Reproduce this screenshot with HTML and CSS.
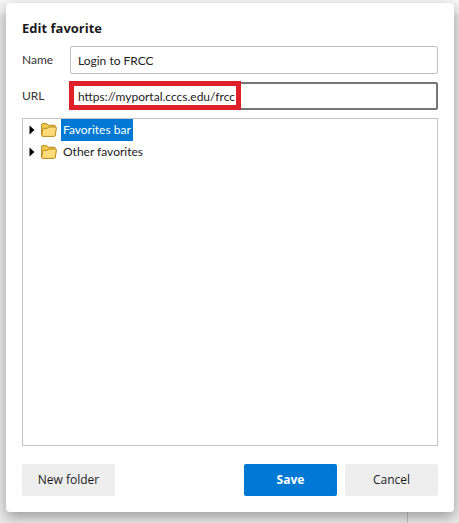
FILE: index.html
```html
<!doctype html>
<html lang="en">
<head>
	<meta charset="utf-8">
	<meta name="viewport" content="width=device-width, initial-scale=1.0" />
	<title>Edit favorite</title>
	<link rel="stylesheet" href="styles.css">
</head>
<body>

	<form class="dialog">
		<h1>Edit favorite</h1>

		<div class="field">
			<label for="name">Name</label>
			<div class="control"><input type="text" id="name" value="Login to FRCC" /></div>
		</div>
		<div class="field">
			<label for="url">URL</label>
			<div class="control">
				<input type="text" id="url" class="active" value="https://myportal.cccs.edu/frcc" />
				<span class="highlight"></span>
			</div>
		</div>

		<ul class="tree" role="tree">
			<li role="treeitem" aria-selected="true">
				<svg class="arrow" viewBox="0 0 6 10"><path d="M0.5 0.5L5.5 5L0.5 9.5Z"/></svg>
				<svg class="folder" viewBox="0 0 16 14"><path class="back" d="M0.6 12V2Q0.6 0.6 2 0.6H5.5L7.3 2.2H13Q14.4 2.2 14.4 3.6V12Z"/><path class="front" d="M0.7 12.2L1.8 6.2Q2 5.3 2.9 5.3H6.3L8 4H14.4Q15.6 4 15.4 5.1L14.3 12.2Q14.1 13.4 12.9 13.4H1.9Q0.5 13.4 0.7 12.2Z"/></svg>
				<span class="title selected">Favorites bar</span>
			</li>
			<li role="treeitem">
				<svg class="arrow" viewBox="0 0 6 10"><path d="M0.5 0.5L5.5 5L0.5 9.5Z"/></svg>
				<svg class="folder" viewBox="0 0 16 14"><path class="back" d="M0.6 12V2Q0.6 0.6 2 0.6H5.5L7.3 2.2H13Q14.4 2.2 14.4 3.6V12Z"/><path class="front" d="M0.7 12.2L1.8 6.2Q2 5.3 2.9 5.3H6.3L8 4H14.4Q15.6 4 15.4 5.1L14.3 12.2Q14.1 13.4 12.9 13.4H1.9Q0.5 13.4 0.7 12.2Z"/></svg>
				<span class="title">Other favorites</span>
			</li>
		</ul>

		<div class="buttons">
			<button type="button" class="new">New folder</button>
			<button type="submit" class="primary">Save</button>
			<button type="button">Cancel</button>
		</div>
	</form>

</body>
</html>
```

FILE: styles.css
```css
* {box-sizing:border-box; margin:0; padding:0;}
body {display:flex; min-height:100vh; padding:3px 5px 11px 6px; background:linear-gradient(#c4c4c4,#c4c4c4) right 51px bottom/1px 11px no-repeat, linear-gradient(#f8f8f8 3px, #f4f4f4 3px, #f4f4f4 14px, #ebebeb 14px); font:12px/16px Lato,"Open Sans",sans-serif; color:#1b1b1b;}

.dialog {flex:1; display:flex; flex-direction:column; padding:16px; background:#fff; border-radius:4px; box-shadow:0 5px 14px rgba(0,0,0,0.35);}
h1 {margin-bottom:9px; font:700 13px/18px "Open Sans",sans-serif;}

.field {display:flex; align-items:center; margin-bottom:8px;}
label {width:48px; color:#333;}
.control {position:relative; flex:1;}
input {display:block; width:100%; height:28px; padding:0 7px; border:1px solid #bebebe; border-radius:2px; background:#fff; font:inherit; color:#222; outline:none;}
input.active {padding:0 6px; border:2px solid #767676;}
/* red frame around the address */
.highlight {position:absolute; top:-1px; left:-1px; width:172px; height:29px; border:5px solid #df1f29; pointer-events:none;}

.tree {flex:1; min-height:120px; border:1px solid #c4c4c4; list-style:none;}
.tree li {display:flex; align-items:center; height:22px; padding-left:6px;}
.arrow {width:6px; height:10px; margin-right:6px; fill:#000;}
.folder {width:16px; height:14px; margin-right:4px; stroke:#b48a1c; stroke-width:1;}
.back {fill:#f0c850;}
.front {fill:#ffdc78;}
.title {padding:0 2px; line-height:22px;}
.selected {background:#0078d4; color:#fff;}

.buttons {display:flex; gap:8px; margin-top:18px;}
button {width:93px; height:32px; border:0; border-radius:2px; background:#eee; font:12px/16px "Open Sans",sans-serif; color:#1b1b1b;}
.new {margin-right:auto;}
.primary {background:#0078d4; color:#fff; font-weight:700;}
```
